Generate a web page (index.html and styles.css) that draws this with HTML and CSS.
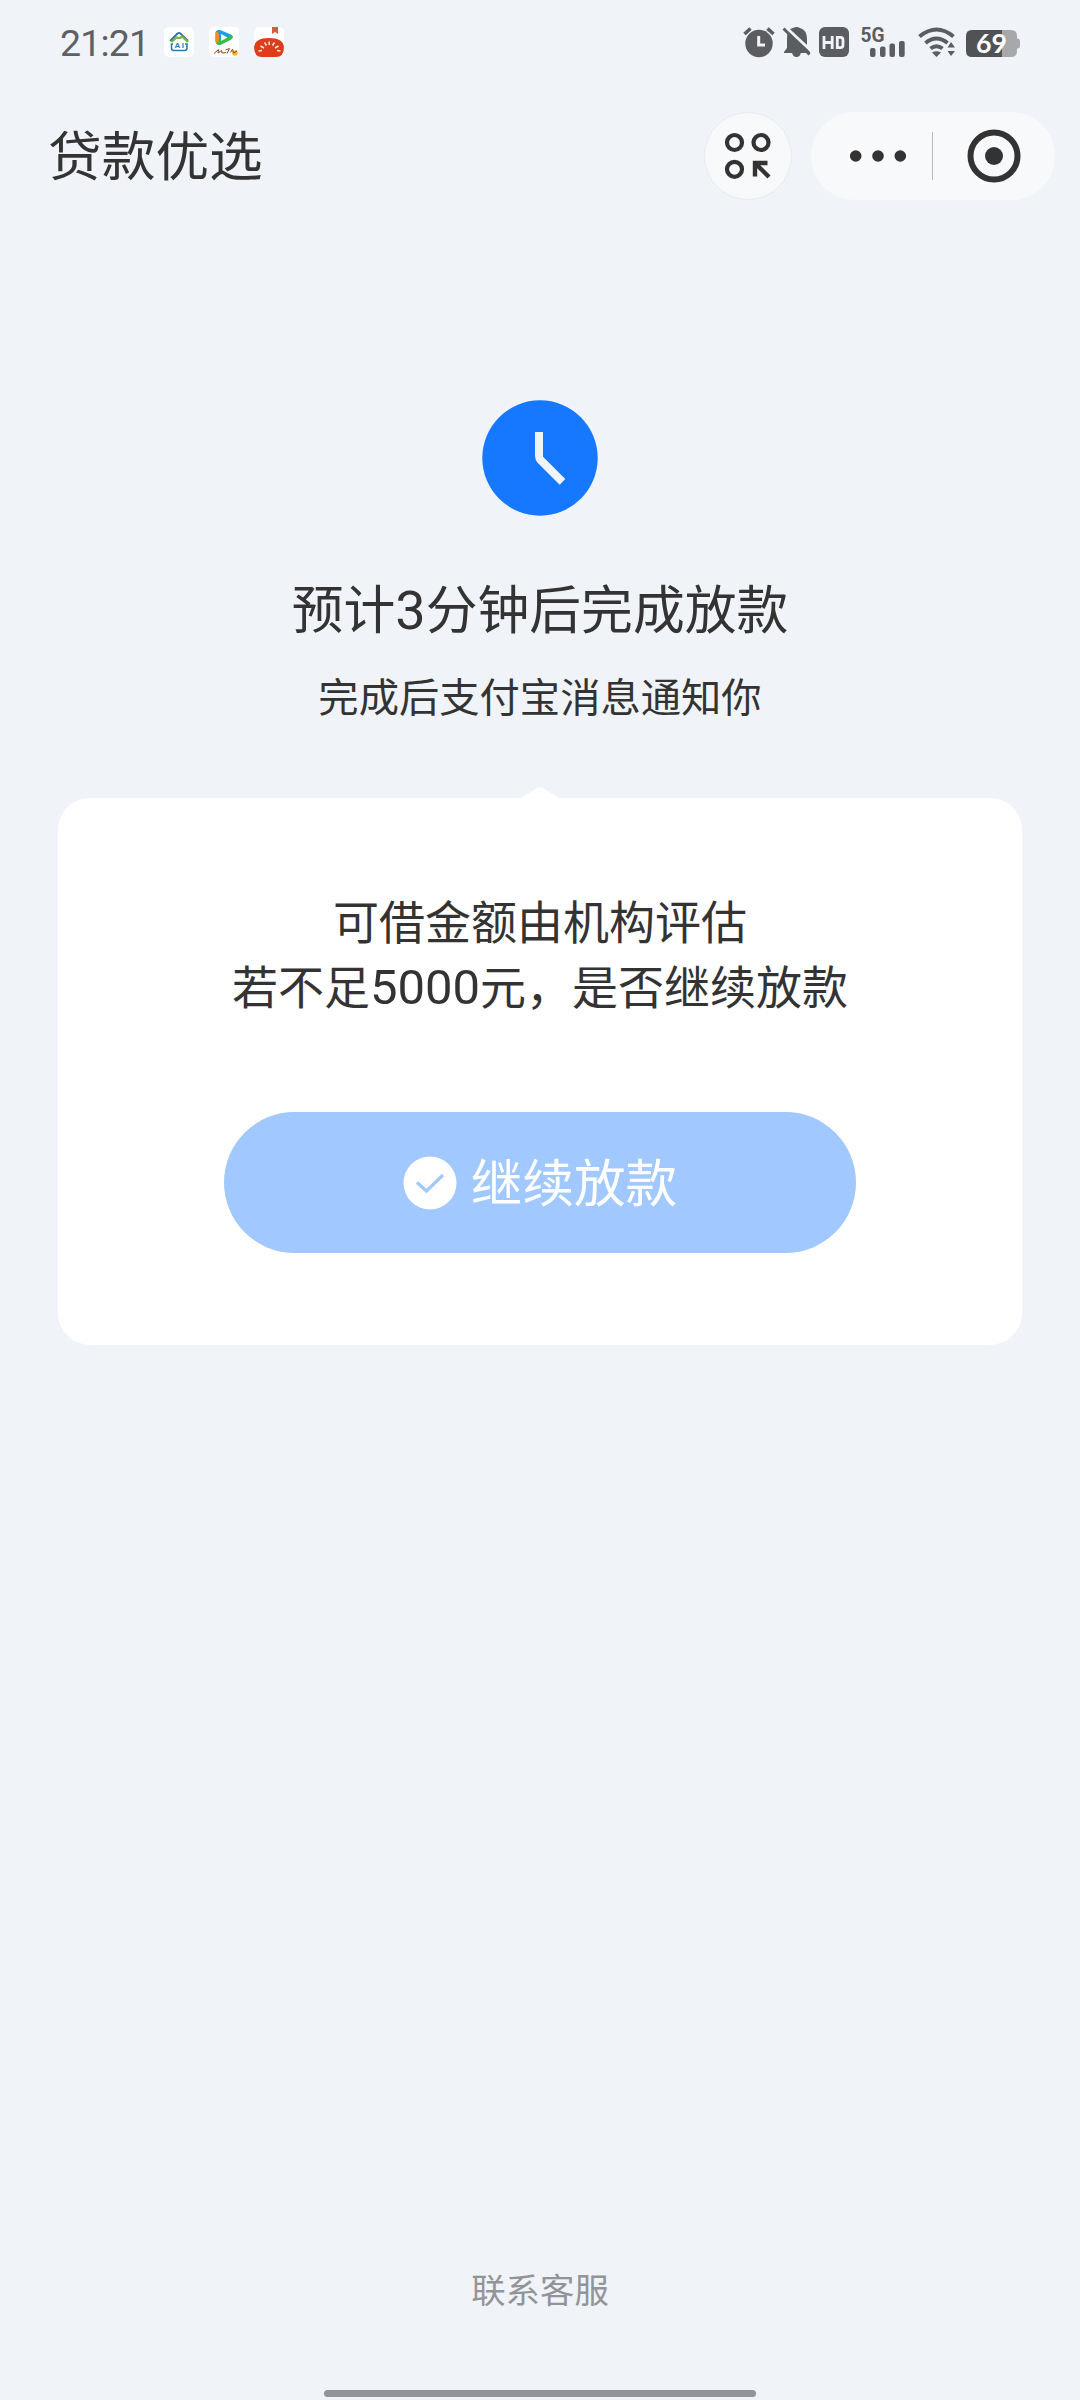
FILE: index.html
```html
<!DOCTYPE html>
<html lang="zh-CN">
<head>
<meta charset="utf-8">
<title>贷款优选</title>
<link rel="stylesheet" href="styles.css">
</head>
<body>
<div class="screen">
  <div class="status">
    <span class="time">21:21</span>
    <div class="apps">
      <svg width="30" height="30" viewBox="0 0 30 30">
        <rect width="30" height="30" rx="5" fill="#fff"/>
        <path d="M6 14L13.500 6.500Q15 5.500 16.500 6.500L24 14" fill="none" stroke="#2b6fa8" stroke-width="1.800"/>
        <path d="M7.500 15L12.500 10.500Q16 12 18 9.500L24 15" fill="none" stroke="#79b544" stroke-width="2.200"/>
        <path d="M9 17H7.500V21Q7.500 23.500 10 23.500H20.500Q23 23.500 23 21V17H21" fill="none" stroke="#2b7cb4" stroke-width="1.600"/>
        <text x="10.500" y="20.500" class="ai" textLength="9.500">AI</text>
      </svg>
      <svg width="30" height="30" viewBox="0 0 30 30">
        <rect width="30" height="30" rx="5" fill="#fff"/>
        <path d="M6.500 7Q6 2.500 11 3L22 7.500Q25.500 10 22 12.500L11 18Q7 18.500 6.500 14Z" fill="#1d9fe8"/>
        <path d="M8 14L22.500 8Q25 10 22 12.500L11 18Q8 18.500 7 15Z" fill="#35c03b"/>
        <path d="M6.500 14V7Q6.500 5 7.500 4L10 7V14L8 16Q6.500 16 6.500 14Z" fill="#f68b1f"/>
        <path d="M12 7L18.500 10.500L12 14Z" fill="#fff"/>
        <circle cx="26" cy="26" r="2.800" fill="#f7b52c"/>
        <path d="M5 26.500L9.500 22.500L9 26L12.500 23.500L13 26L17 25.500M16.500 23L20.500 21.500L18 26.500M21.500 25.500L23.500 22L24.500 26L28 24" fill="none" stroke="#8a4a22" stroke-width="1"/>
      </svg>
      <svg width="30" height="30" viewBox="0 0 30 30">
        <rect width="30" height="30" rx="5" fill="#fff"/>
        <path d="M18 0H24V7L21 5L18 7Z" fill="#cf5f43"/>
        <path d="M0 20Q1 11 15 11Q29 11 30 20Q30 30 22 30H8Q0 30 0 20Z" fill="#dd3d1d"/>
        <path d="M4.500 24L8 23.500M6.500 19L10 21M10.500 15.500L12.500 18.500M15.200 14.500V18M20.500 15.500L18.500 18.500M24.500 19L21 21M26.500 24L23 23.500" stroke="#ffe9dc" stroke-width="1.500"/>
      </svg>
    </div>
    <svg class="indicators" width="280" height="34" viewBox="742 25 280 34">
      <g fill="#5b5d61" stroke="none">
        <circle cx="759" cy="43.500" r="13.700"/>
        <path d="M744.500 34L750.500 28.500M767.500 28.500L773.500 34" stroke="#5b5d61" stroke-width="3.600"/>
        <path d="M758.700 36V45H765" fill="none" stroke="#f0f3f8" stroke-width="3"/>
        <path d="M784 52L787 48V39Q787 29 793 28Q796.500 26 800 28Q807 30 807 39V48L810 52V53H784ZM792 52.500H801Q800 57 796.500 57Q793 57 792 52.500Z"/>
        <path d="M785 26.500L812 51.500" stroke="#f0f3f8" stroke-width="3"/>
        <path d="M783.500 28.500L809.500 54.500" stroke="#5b5d61" stroke-width="2.800"/>
        <rect x="819" y="27" width="30" height="30" rx="6"/>
        <path d="M824 36V49M832.200 36V49M824 42.500H832.200M837.300 37.400V47.600H840.500Q843 47.600 843 45V40Q843 37.400 840.500 37.400Z" fill="none" stroke="#f0f3f8" stroke-width="2.800"/>
        <rect x="870" y="48" width="5.500" height="9" rx="2"/>
        <rect x="880" y="46.500" width="5.500" height="10.500" rx="2"/>
        <rect x="889.500" y="43.500" width="5.500" height="13.500" rx="2"/>
        <rect x="899" y="41" width="5.700" height="16" rx="2"/>
        <path d="M919.500 36.500Q936.500 22.500 953.500 36.500M925.500 43Q936.500 34 947.500 43M930.500 48.500Q936.500 44 942.500 48.500" fill="none" stroke="#5b5d61" stroke-width="4"/>
        <path d="M932 52.500Q936.500 50 941 52.500L936.500 57Z"/>
        <path d="M946.500 48L951 41L956 48Z M946.500 50.500H956L951 57Z" stroke="#f0f3f8" stroke-width="1.200"/>
      </g>
      <path d="M1002 30H1011Q1017 30 1017 36V38.500H1018Q1020 39 1020 41V46Q1020 48 1018 48.500H1017V51Q1017 57 1011 57H1002Z" fill="#a6a8aa"/>
      <path d="M972 30H1002V57H972Q966 57 966 51V36Q966 30 972 30Z" fill="#505254"/>
      <text x="860.500" y="41.500" class="net" textLength="24" lengthAdjust="spacingAndGlyphs">5G</text>
      <text x="976" y="53" class="level" textLength="31" lengthAdjust="spacingAndGlyphs">69</text>
    </svg>
  </div>

  <header class="header">
    <h1 class="title">贷款优选</h1>
    <div class="tools">
      <div class="round">
        <svg width="48" height="48" viewBox="0 0 48 48" fill="none" stroke="#333" stroke-width="4.200">
          <circle cx="10.500" cy="10.500" r="7.500"/>
          <circle cx="37" cy="10.500" r="7.500"/>
          <circle cx="10.500" cy="37.300" r="7.500"/>
          <path d="M31 44.500V31H43.500M32 32L45 45" stroke-width="4.400"/>
        </svg>
      </div>
      <div class="capsule">
        <svg width="56" height="12" viewBox="0 0 56 12" fill="#333">
          <circle cx="5.700" cy="6" r="5.800"/><circle cx="28" cy="6" r="5.800"/><circle cx="50.300" cy="6" r="5.800"/>
        </svg>
        <span class="divider"></span>
        <svg width="54" height="54" viewBox="0 0 54 54">
          <circle cx="27" cy="27" r="23.500" fill="none" stroke="#333" stroke-width="6"/>
          <circle cx="27" cy="27" r="9" fill="#333"/>
        </svg>
      </div>
    </div>
  </header>

  <main class="main">
    <svg class="clock" width="116" height="116" viewBox="0 0 116 116">
      <circle cx="58" cy="58" r="57.700" fill="#1677ff"/>
      <path d="M57 32V56Q57 58.500 58.700 60.200L80.500 81.800" fill="none" stroke="#f0f3f8" stroke-width="8"/>
    </svg>
    <h2 class="headline">预计<span class="n">3</span>分钟后完成放款</h2>
    <p class="sub">完成后支付宝消息通知你</p>
    <section class="card">
      <svg class="notch" width="48" height="12" viewBox="0 0 48 12"><path d="M0 12Q5 11.500 9 9L20 1.500Q24 -1 28 1.500L39 9Q43 11.500 48 12Z" fill="#fff"/></svg>
      <p class="ask">可借金额由机构评估<br>若不足<span class="num">5000</span>元，是否继续放款</p>
      <button class="go">
        <svg width="54" height="54" viewBox="0 0 54 54">
          <circle cx="27" cy="27" r="26.500" fill="#fff"/>
          <path d="M14 26.500L23.500 35L40 19" fill="none" stroke="#a1c8ff" stroke-width="3.200"/>
        </svg>
        <span>继续放款</span>
      </button>
    </section>
  </main>

  <footer class="footer">
    <span class="service">联系客服</span>
    <span class="homebar"></span>
  </footer>
</div>
</body>
</html>
```
FILE: styles.css
```css
* { box-sizing: border-box; margin: 0; padding: 0; }
body {
  background: #f0f3f8;
  color: #333;
  font-family: "Noto Sans CJK SC", sans-serif;
}
svg { display: block; flex: none; }
.screen {
  width: 1080px;
  height: 2400px;
  display: flex;
  flex-direction: column;
  overflow: hidden;
}
.status {
  height: 84px;
  padding: 0 58px 0 60px;
  display: flex;
  align-items: center;
}
.time {
  width: 104px;
  padding-top: 2px;
  font: 37.500px/42px Roboto, sans-serif;
  letter-spacing: -0.8px;
  color: #5e6064;
}
.apps { display: flex; gap: 15px; }
.indicators { margin-left: auto; }
.ai { font: bold 8px "Liberation Sans", sans-serif; fill: #2b7cb4; }
.net { font: bold 20px Roboto, sans-serif; fill: #5b5d61; }
.level { font: bold 26px Lato, sans-serif; fill: #fff; }
.header {
  height: 144px;
  padding: 0 25px 0 48px;
  display: flex;
  align-items: center;
  justify-content: space-between;
}
.title { font-size: 53.700px; line-height: 80px; font-weight: 400; margin-top: -6px; }
.tools { display: flex; gap: 19px; }
.round {
  width: 88px;
  height: 88px;
  border-radius: 44px;
  background: #f8f9fb;
  border: 1px solid #e9ebf1;
  display: flex;
  align-items: center;
  justify-content: center;
}
.capsule {
  width: 244px;
  height: 88px;
  border-radius: 44px;
  background: #f8f9fb;
  display: flex;
  align-items: center;
  padding-left: 39px;
}
.divider { width: 1px; height: 48px; background: #b8babd; margin: 0 34.500px 0 25.500px; }
.main {
  flex: 1;
  padding: 172px 58px 0;
  display: flex;
  flex-direction: column;
  align-items: center;
}
.headline { font-size: 51.800px; line-height: 76px; font-weight: 400; margin-top: 53px; }
.n { font: 54px/1 Roboto, sans-serif; }
.sub { font-size: 40.300px; line-height: 58px; margin-top: 21px; }
.card {
  position: relative;
  width: 964px;
  height: 547px;
  margin-top: 74px;
  border-radius: 32px;
  background: #fff;
  display: flex;
  flex-direction: column;
  align-items: center;
}
.notch { position: absolute; top: -11px; left: 458px; }
.ask { font-size: 46px; line-height: 65px; text-align: center; margin-top: 89px; }
.num { font: 49px/1 Roboto, sans-serif; }
.go {
  width: 632px;
  height: 141px;
  margin-top: 95px;
  border: 0;
  border-radius: 71px;
  background: #a1c8ff;
  color: #fff;
  font: 51.600px/76px "Noto Sans CJK SC", sans-serif;
  display: flex;
  align-items: center;
  justify-content: center;
  gap: 14px;
}
.go span { margin-top: -6px; }
.footer {
  height: 142px;
  display: flex;
  flex-direction: column;
  align-items: center;
  justify-content: space-between;
  padding-bottom: 3px;
}
.service { font-size: 34.400px; line-height: 60px; color: #929498; }
.homebar { width: 432px; height: 7px; border-radius: 4px; background: #929497; }
```
